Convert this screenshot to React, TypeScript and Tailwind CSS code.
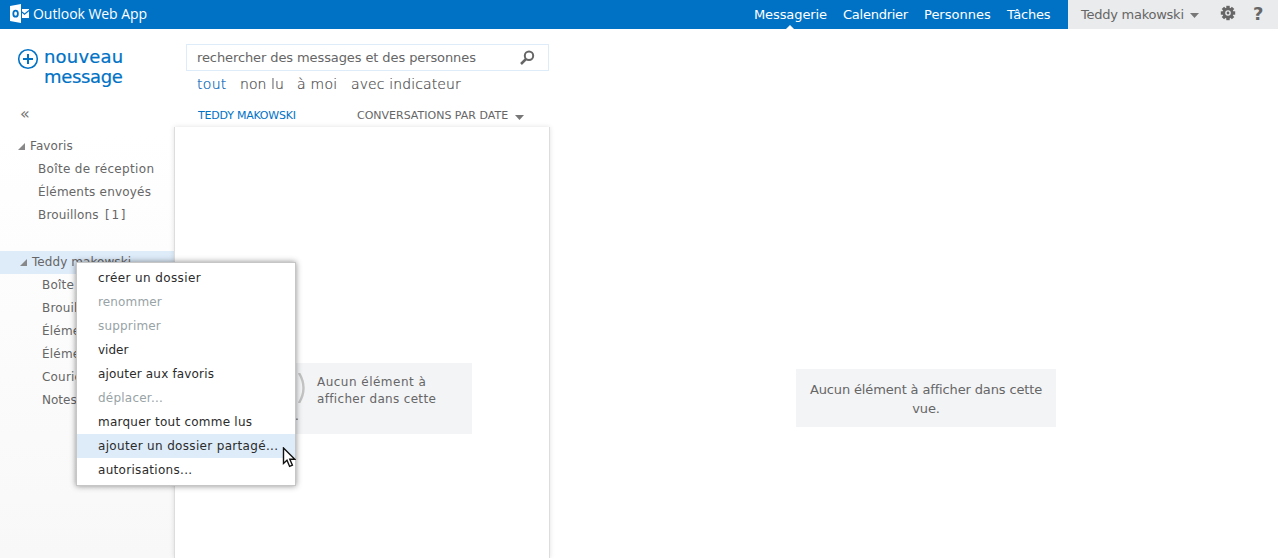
import React from "react";

const favorites = [
  { label: "Boîte de réception", cls: "tracking-[0.34px]" },
  { label: "Éléments envoyés", cls: "tracking-[0.2px]" },
];

const folders = [
  { label: "Boîte", cls: "tracking-[0.2px]" },
  { label: "Brouil", cls: "tracking-[0.15px]" },
  { label: "Éléme", cls: "tracking-[0.2px]" },
  { label: "Éléme", cls: "tracking-[0.2px]" },
  { label: "Courie", cls: "tracking-[0.2px]" },
  { label: "Notes", cls: "" },
];

const menu = [
  { label: "créer un dossier", cls: "tracking-[0.38px] text-[#2b2b2b]" },
  { label: "renommer", cls: "tracking-[0.14px] text-[#98a3a6]" },
  { label: "supprimer", cls: "tracking-[0.18px] text-[#98a3a6]" },
  { label: "vider", cls: "text-[#2b2b2b]" },
  { label: "ajouter aux favoris", cls: "tracking-[0.17px] text-[#2b2b2b]" },
  { label: "déplacer...", cls: "tracking-[0.22px] text-[#98a3a6]" },
  { label: "marquer tout comme lus", cls: "tracking-[0.24px] text-[#2b2b2b]" },
  { label: "ajouter un dossier partagé...", cls: "tracking-[0.33px] bg-[#deebf9] text-[#2b2b2b]" },
  { label: "autorisations...", cls: "tracking-[0.3px] text-[#2b2b2b]" },
];

function Logo() {
  return (
    <svg width="20" height="20" viewBox="0 0 20 20" className="block shrink-0">
      <path d="M0 2 11 0v19L0 17z" fill="#fff" />
      <ellipse cx="5.6" cy="9.7" rx="2.3" ry="3" fill="none" stroke="#0072c6" strokeWidth="1.8" />
      <path d="M12 5h7v9h-7z" fill="#fff" />
      <path d="m12 8 2.5 2.3L19 6.5" fill="none" stroke="#0072c6" strokeWidth="1.2" />
    </svg>
  );
}

function Gear() {
  return (
    <svg width="16" height="16" viewBox="0 0 16 16" className="block">
      <g fill="#666">
        <path d="M6.3.8h3.4v14.4H6.3z" />
        <path d="M6.3.8h3.4v14.4H6.3z" transform="rotate(45 8 8)" />
        <path d="M6.3.8h3.4v14.4H6.3z" transform="rotate(90 8 8)" />
        <path d="M6.3.8h3.4v14.4H6.3z" transform="rotate(135 8 8)" />
        <circle cx="8" cy="8" r="5.5" />
      </g>
      <circle cx="8" cy="8" r="2.8" fill="#eaebed" />
      <circle cx="8" cy="8" r="1.4" fill="#666" />
    </svg>
  );
}

function Caret() {
  return (
    <svg width="9" height="5" viewBox="0 0 9 5" className="mt-[2px] block shrink-0">
      <path d="M0 0h9L4.5 5z" fill="#777" />
    </svg>
  );
}

function Twisty() {
  return (
    <svg width="7" height="7" viewBox="0 0 7 7" className="block shrink-0">
      <path d="M7 0v7H0z" fill="#888" />
    </svg>
  );
}

export default function App() {
  return (
    <div className="relative flex h-[558px] w-[1278px] flex-col overflow-hidden bg-white font-['DejaVu_Sans',sans-serif] text-[12px] text-[#666]">
      <header className="flex h-[29px] shrink-0 bg-[#0072c6] text-[13px] text-white">
        <div className="flex w-[754px] items-start pl-[10px] pt-[4px]">
          <Logo />
          <span className="ml-[3px] whitespace-nowrap font-['Open_Sans',sans-serif] text-[14px] leading-[20px] tracking-[-0.05px]">Outlook Web App</span>
        </div>
        <nav className="flex w-[314px] whitespace-nowrap leading-[29px]">
          <span className="relative w-[89px] tracking-[-0.1px]">
            Messagerie
            <svg width="8" height="4" viewBox="0 0 8 4" className="absolute bottom-0 left-[32px]">
              <path d="M0 4 4 0l4 4z" fill="#fff" />
            </svg>
          </span>
          <span className="w-[81px] tracking-[-0.25px]">Calendrier</span>
          <span className="w-[83px]">Personnes</span>
          <span className="tracking-[-0.2px]">Tâches</span>
        </nav>
        <div className="flex flex-1 items-center bg-[#eaebed] pl-[13px] text-[#666]">
          <span className="w-[109px] whitespace-nowrap tracking-[-0.25px]">Teddy makowski</span>
          <Caret />
          <div className="mb-[3px] ml-[21px]"><Gear /></div>
          <span className="mb-[2px] ml-[17px] text-[18px] font-bold leading-[27px]">?</span>
        </div>
      </header>

      <div className="flex min-h-0 flex-1">
        <aside className="flex w-[174px] shrink-0 flex-col bg-linear-to-b from-white from-20% to-[#f8f8f8]">
          <div className="flex h-[77px] shrink-0 pl-[17px] pt-[18px] text-[#0072c6]">
            <svg width="22" height="22" viewBox="0 0 22 22" className="mt-[1px] block shrink-0">
              <circle cx="11" cy="11" r="9.3" fill="none" stroke="currentColor" strokeWidth="1.6" />
              <path d="M11 6v10M6 11h10" stroke="currentColor" strokeWidth="2" />
            </svg>
            <div className="ml-[5px] text-[18px] leading-[20px] [-webkit-text-stroke:0.2px]">
              <div className="tracking-[0.2px]">nouveau</div>
              <div className="tracking-[-0.35px]">message</div>
            </div>
          </div>
          <div className="h-[28px] shrink-0 pl-[20px] text-[16px] leading-[16px] text-[#777]">«</div>
          <div className="flex h-[24px] shrink-0 items-start pl-[18px]">
            <span className="mt-[9px]"><Twisty /></span>
            <span className="ml-[5px] leading-[25px] tracking-[0.1px]">Favoris</span>
          </div>
          {favorites.map((f) => (
            <div key={f.label} className={`h-[23px] whitespace-nowrap pl-[38px] leading-[23px] ${f.cls}`}>{f.label}</div>
          ))}
          <div className="flex h-[23px] whitespace-nowrap pl-[38px] leading-[23px]">
            <span className="w-[67px] tracking-[0.15px]">Brouillons</span>
            <span className="tracking-[1.7px]">[1]</span>
          </div>
          <div className="mt-[24px] flex h-[23px] shrink-0 items-start bg-[#deebf9] pl-[20px]">
            <span className="mt-[8px]"><Twisty /></span>
            <span className="ml-[5px] leading-[23px] tracking-[0.07px]">Teddy makowski</span>
          </div>
          {folders.map((f, i) => (
            <div key={i} className={`h-[23px] whitespace-nowrap pl-[42px] leading-[23px] ${f.cls}`}>{f.label}</div>
          ))}
        </aside>

        <section className="flex w-[376px] shrink-0 flex-col">
          <div className="ml-[12px] mt-[15px] flex h-[27px] w-[363px] shrink-0 items-center border border-[#deebf9] pl-[10px] text-[13px]">
            <span className="w-[323px] whitespace-nowrap tracking-[-0.1px]">rechercher des messages et des personnes</span>
            <svg width="15" height="15" viewBox="0 0 15 15" className="block shrink-0">
              <circle cx="9" cy="5.8" r="4.2" fill="none" stroke="#666" strokeWidth="2" />
              <path d="m6 9-5 5" stroke="#666" strokeWidth="2.5" />
            </svg>
          </div>
          <div className="flex h-[27px] shrink-0 whitespace-nowrap pl-[23px] text-[14px] font-extralight leading-[27px] text-[#4d4d4d] [-webkit-text-stroke:0.2px]">
            <span className="w-[43px] tracking-[0.3px] text-[#0064b8]">tout</span>
            <span className="w-[57px] tracking-[0.05px]">non lu</span>
            <span className="w-[54px] tracking-[0.25px]">à moi</span>
            <span className="tracking-[0.12px]">avec indicateur</span>
          </div>
          <div className="flex h-[28px] shrink-0 items-center whitespace-nowrap pl-[24px] pt-[8px] text-[11px]">
            <span className="w-[159px] tracking-[-0.22px] text-[#0072c6]">TEDDY MAKOWSKI</span>
            <span className="w-[158px]">CONVERSATIONS PAR DATE</span>
            <Caret />
          </div>
          <div className="mt-px flex flex-1 border-x border-[#ddd] bg-white pl-[77px] shadow-[0_0_5px_rgba(0,0,0,0.12)]">
            <div className="mt-[236px] h-[71px] w-[220px] bg-[#f3f4f6] pl-[45px] pt-[10px] leading-[17px]">
              <div className="flex h-[35px]">
                <svg width="8" height="30" viewBox="0 0 8 30" className="block shrink-0">
                  <path d="M2 0q9 15 0 30" fill="none" stroke="#c3c3c3" strokeWidth="2.4" />
                </svg>
                <div className="ml-[12px] w-[135px] whitespace-nowrap pt-px">
                  <div className="tracking-[0.48px]">Aucun élément à</div>
                  <div className="tracking-[0.33px]">afficher dans cette</div>
                </div>
              </div>
              <div className="-ml-[2px]">.</div>
            </div>
          </div>
        </section>

        <main className="flex flex-1 items-start pl-[246px] pt-[340px]">
          <div className="h-[58px] w-[260px] bg-[#f3f4f6] pt-[11px] text-center text-[13px] leading-[19px] tracking-[-0.14px]">
            Aucun élément à afficher dans cette vue.
          </div>
        </main>
      </div>

      <div className="absolute left-[76px] top-[262px] h-[224px] w-[220px] border border-[#c6c6c6] bg-white pt-[3px] shadow-[0_0_6px_rgba(0,0,0,0.45)]">
        {menu.map((m) => (
          <div key={m.label} className={`h-[24px] whitespace-nowrap pl-[21px] leading-[24px] ${m.cls}`}>
            {m.label}
          </div>
        ))}
      </div>
      <svg width="14" height="21" viewBox="0 0 14 21" className="absolute left-[282px] top-[447px]">
        <path d="M1.5 1v15.5l3.5-3.3 2.6 6.2 2.8-1.2-2.6-5.9h5z" fill="#fff" stroke="#111" strokeWidth="1.4" />
      </svg>
    </div>
  );
}
